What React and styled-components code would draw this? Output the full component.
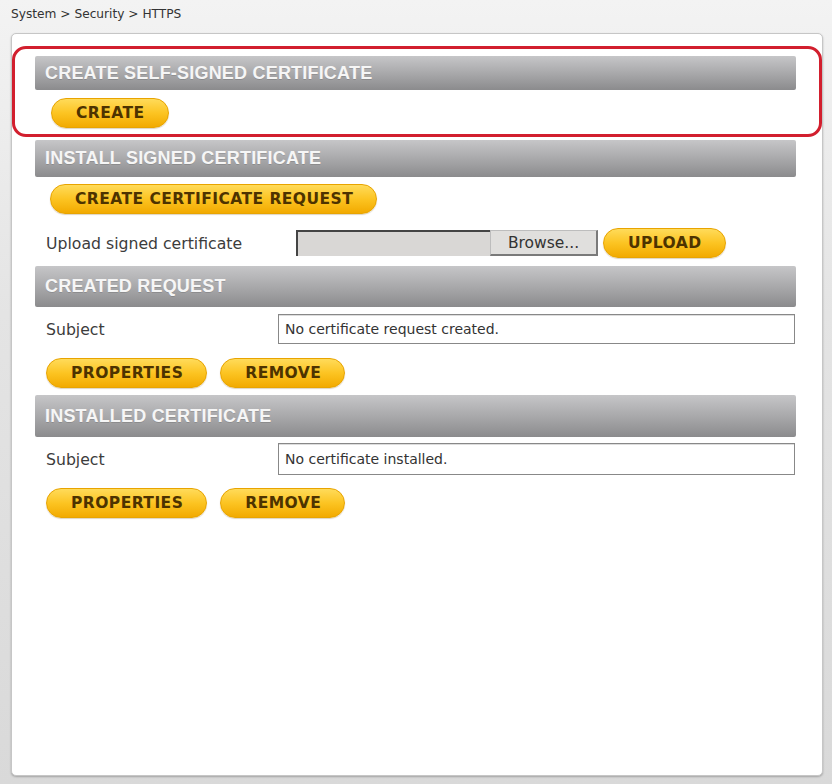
import React from "react";
import styled, { createGlobalStyle } from "styled-components";

const Global = createGlobalStyle`
  html, body { margin: 0; padding: 0; }
  body {
    background: linear-gradient(to bottom, #f3f3f3 0%, #e4e4e4 40%, #d9d9d9 100%);
    font-family: "DejaVu Sans", Verdana, sans-serif;
  }
  * { box-sizing: border-box; }
`;

const Page = styled.div`
  height: 784px;
  padding: 7px 9px 8px 11px;
  display: flex;
  flex-direction: column;
`;

const Breadcrumb = styled.div`
  font-size: 12.2px;
  line-height: 14px;
  height: 14px;
  color: #333;
  margin-bottom: 12px;
`;

const Panel = styled.div`
  flex: 1;
  background: #fff;
  border: 1px solid #c6c6c6;
  border-radius: 5px;
  box-shadow: 0 1px 2px rgba(0, 0, 0, 0.25);
  padding-top: 12px;
`;

const Highlight = styled.div`
  border: 3px solid #d21f2e;
  border-radius: 14px;
  padding: 7px 23px 6px 20px;
`;

const Section = styled.div`
  margin: ${(p) => p.$top || 0}px 26px 0 23px;
`;

const Header = styled.div`
  height: ${(p) => p.$h}px;
  display: flex;
  align-items: center;
  padding-left: 10px;
  background: linear-gradient(to bottom, #c6c6c8 0%, #a9a9ab 50%, #8b8b8d 100%);
  border-radius: 2px;
  font-family: "Liberation Sans", Arial, sans-serif;
  font-weight: bold;
  font-size: 18px;
  color: #f6f6f6;
  text-shadow: 0 1px 0 rgba(0, 0, 0, 0.12);
  letter-spacing: 0.2px;
`;

const ButtonRow = styled.div`
  display: flex;
  gap: 13px;
  margin-top: ${(p) => p.$top}px;
  padding-left: ${(p) => p.$indent}px;
`;

const Button = styled.button`
  height: 30px;
  padding: 0 23px 0 24px;
  border-radius: 15px;
  border: 1px solid #e8a400;
  background: linear-gradient(to bottom, #ffdb5a 0%, #fcc422 50%, #f2aa00 100%);
  box-shadow: 0 1px 1px rgba(120, 80, 0, 0.25);
  font-family: "DejaVu Sans", Verdana, sans-serif;
  font-weight: bold;
  font-size: 15.5px;
  letter-spacing: 0.45px;
  color: #4d3300;
  cursor: pointer;
  white-space: nowrap;
  margin-left: ${(p) => p.$ml || 0}px;
`;

const FieldRow = styled.div`
  display: grid;
  grid-template-columns: ${(p) => p.$label}px ${(p) => p.$rest};
  align-items: center;
  margin-top: ${(p) => p.$top}px;
  min-height: ${(p) => p.$h}px;
`;

const Label = styled.div`
  padding-left: 11px;
  font-size: 15.7px;
  color: #3c3c3c;
`;

const TextBox = styled.div`
  height: ${(p) => p.$h}px;
  border: 1px solid #888;
  box-shadow: inset 0 1px 0 #ddd;
  display: flex;
  align-items: center;
  padding-left: 6px;
  font-size: 14px;
  color: #333;
  margin-right: 1px;
`;

const UploadLine = styled.div`
  display: flex;
  align-items: center;
`;

const FileInput = styled.div`
  display: flex;
  width: 302px;
  height: 26px;
`;

const FileField = styled.div`
  flex: 1;
  background: #d9d7d5;
  border-top: 2px solid #444;
  border-left: 2px solid #444;
`;

const BrowseBtn = styled.div`
  width: 108px;
  background: #e0dfdd;
  border: 1px solid #bdbdbd;
  border-right: 2px solid #7a7a7a;
  border-bottom: 2px solid #7a7a7a;
  display: flex;
  align-items: center;
  justify-content: center;
  font-size: 15.5px;
  color: #333;
`;

export default function App() {
  return (
    <>
      <Global />
      <Page>
        <Breadcrumb>System &gt; Security &gt; HTTPS</Breadcrumb>
        <Panel>
          <Highlight>
            <Header $h={34}>CREATE SELF-SIGNED CERTIFICATE</Header>
            <ButtonRow $top={8} $indent={16}>
              <Button>CREATE</Button>
            </ButtonRow>
          </Highlight>

          <Section $top={3}>
            <Header $h={37}>INSTALL SIGNED CERTIFICATE</Header>
            <ButtonRow $top={7} $indent={15}>
              <Button>CREATE CERTIFICATE REQUEST</Button>
            </ButtonRow>
            <FieldRow $label={261} $rest="auto" $top={14} $h={30}>
              <Label>Upload signed certificate</Label>
              <UploadLine>
                <FileInput>
                  <FileField />
                  <BrowseBtn>Browse...</BrowseBtn>
                </FileInput>
                <Button $ml={5}>UPLOAD</Button>
              </UploadLine>
            </FieldRow>
          </Section>

          <Section $top={8}>
            <Header $h={41}>CREATED REQUEST</Header>
            <FieldRow $label={243} $rest="1fr" $top={7} $h={30}>
              <Label>Subject</Label>
              <TextBox $h={30}>No certificate request created.</TextBox>
            </FieldRow>
            <ButtonRow $top={14} $indent={11}>
              <Button>PROPERTIES</Button>
              <Button>REMOVE</Button>
            </ButtonRow>
          </Section>

          <Section $top={7}>
            <Header $h={42}>INSTALLED CERTIFICATE</Header>
            <FieldRow $label={243} $rest="1fr" $top={6} $h={32}>
              <Label>Subject</Label>
              <TextBox $h={32}>No certificate installed.</TextBox>
            </FieldRow>
            <ButtonRow $top={13} $indent={11}>
              <Button>PROPERTIES</Button>
              <Button>REMOVE</Button>
            </ButtonRow>
          </Section>
        </Panel>
      </Page>
    </>
  );
}
